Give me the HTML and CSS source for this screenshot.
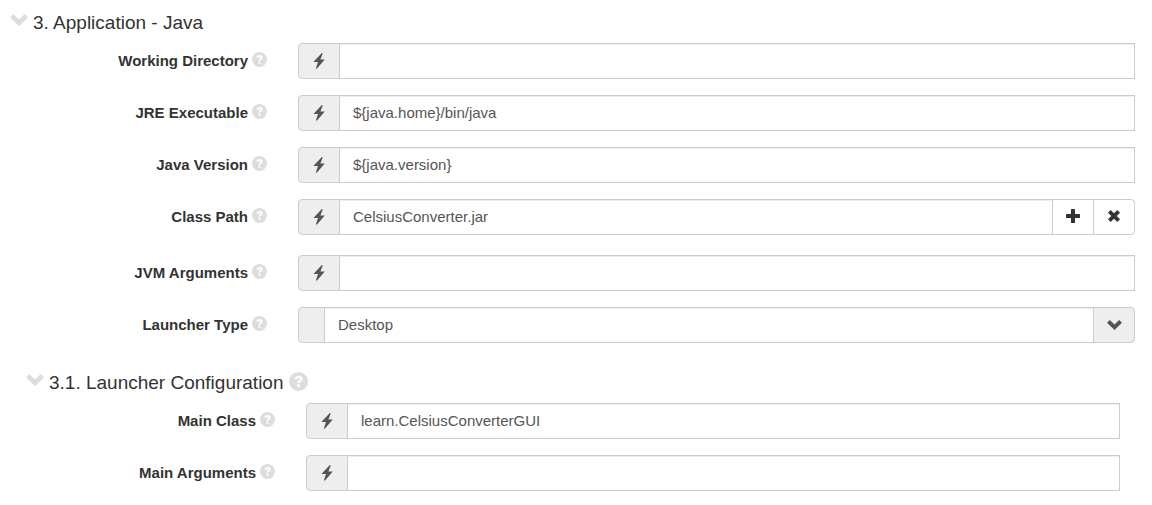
FILE: index.html
```html
<!DOCTYPE html>
<html lang="en">
<head>
<meta charset="utf-8">
<title>Application - Java</title>
<link rel="stylesheet" href="styles.css">
</head>
<body>
<svg class="symbols" aria-hidden="true">
  <symbol id="bolt" viewBox="0 0 12 16"><path d="M8.600 .3 .4 9 5 9 2.800 15.600 4 15.600 11.800 6.400 7.400 6.400 9.800 .3Z"/></symbol>
  <symbol id="help" viewBox="0 0 16 16"><path fill-rule="evenodd" d="M8 0a8 8 0 1 1 0 16A8 8 0 0 1 8 0ZM4.800 6.200H7.100C7.100 5.400 7.500 5 8.100 5S9 5.400 9 5.900C9 6.900 6.900 7.200 6.900 9.300H9.100C9.100 8.300 11.400 7.700 11.400 5.700C11.400 4.200 10 3.100 8.200 3.100C6.200 3.100 4.800 4.200 4.800 6.200ZM6.900 10.400V12.600H9.100V10.400Z"/></symbol>
  <symbol id="chevron" viewBox="0 0 18 12"><path d="M0 3.400 3.400 0 9 5.400 14.600 0 18 3.400 9 12Z"/></symbol>
  <symbol id="plus" viewBox="0 0 14 14"><path d="M5 .6Q5 0 5.600 0H8.400Q9 0 9 .6V5H13.400Q14 5 14 5.600V8.400Q14 9 13.400 9H9V13.400Q9 14 8.400 14H5.600Q5 14 5 13.400V9H.6Q0 9 0 8.400V5.600Q0 5 .6 5H5Z"/></symbol>
  <symbol id="remove" viewBox="0 0 12 12"><path d="M0 2.700 2.700 0 6 3.300 9.300 0 12 2.700 8.700 6 12 9.300 9.300 12 6 8.700 2.700 12 0 9.300 3.300 6Z"/></symbol>
</svg>
<form class="section">
  <h2 class="heading"><svg class="toggle"><use href="#chevron"/></svg>3. Application - Java</h2>
  <div class="row">
    <div class="label"><label for="dir">Working Directory</label><svg class="help"><use href="#help"/></svg></div>
    <div class="group"><span class="addon"><svg class="bolt"><use href="#bolt"/></svg></span><input class="field" id="dir" type="text"></div>
  </div>
  <div class="row">
    <div class="label"><label for="jre">JRE Executable</label><svg class="help"><use href="#help"/></svg></div>
    <div class="group"><span class="addon"><svg class="bolt"><use href="#bolt"/></svg></span><input class="field" id="jre" type="text" value="${java.home}/bin/java"></div>
  </div>
  <div class="row">
    <div class="label"><label for="version">Java Version</label><svg class="help"><use href="#help"/></svg></div>
    <div class="group"><span class="addon"><svg class="bolt"><use href="#bolt"/></svg></span><input class="field" id="version" type="text" value="${java.version}"></div>
  </div>
  <div class="row row-list">
    <div class="label"><label for="path">Class Path</label><svg class="help"><use href="#help"/></svg></div>
    <div class="group"><span class="addon"><svg class="bolt"><use href="#bolt"/></svg></span><input class="field" id="path" type="text" value="CelsiusConverter.jar"><button class="action" type="button" aria-label="Add"><svg class="plus"><use href="#plus"/></svg></button><button class="action" type="button" aria-label="Remove"><svg class="remove"><use href="#remove"/></svg></button></div>
  </div>
  <div class="row">
    <div class="label"><label for="jvm">JVM Arguments</label><svg class="help"><use href="#help"/></svg></div>
    <div class="group"><span class="addon"><svg class="bolt"><use href="#bolt"/></svg></span><input class="field" id="jvm" type="text"></div>
  </div>
  <div class="row">
    <div class="label"><label for="launcher">Launcher Type</label><svg class="help"><use href="#help"/></svg></div>
    <div class="group"><span class="addon addon-empty"></span><select class="field" id="launcher"><option>Desktop</option></select><span class="addon addon-end"><svg class="arrow"><use href="#chevron"/></svg></span></div>
  </div>
  <div class="subsection">
    <h3 class="heading"><svg class="toggle"><use href="#chevron"/></svg>3.1. Launcher Configuration<svg class="help help-large"><use href="#help"/></svg></h3>
    <div class="row">
      <div class="label"><label for="main">Main Class</label><svg class="help"><use href="#help"/></svg></div>
      <div class="group"><span class="addon"><svg class="bolt"><use href="#bolt"/></svg></span><input class="field" id="main" type="text" value="learn.CelsiusConverterGUI"></div>
    </div>
    <div class="row">
      <div class="label"><label for="args">Main Arguments</label><svg class="help"><use href="#help"/></svg></div>
      <div class="group"><span class="addon"><svg class="bolt"><use href="#bolt"/></svg></span><input class="field" id="args" type="text"></div>
    </div>
  </div>
</form>
</body>
</html>
```
FILE: styles.css
```css
* { box-sizing: border-box; }
body {
  margin: 0;
  background: #fff;
  color: #333;
  font: 15px/20px "Liberation Sans", Arial, sans-serif;
}
svg { flex: none; fill: currentColor; }
.symbols { display: none; }
.section { padding: 11px 17px 0 10px; }
.subsection { padding: 12px 15px 0 16px; }
.heading {
  display: flex;
  align-items: center;
  margin: 0 0 8px;
  font-size: 19px;
  font-weight: 400;
  line-height: 24px;
}
.toggle {
  width: 18px;
  height: 12px;
  margin: 0 5px 6px 0;
  color: #ddd;
}
.row {
  display: grid;
  grid-template-columns: 257px 1fr;
  column-gap: 31px;
  margin-bottom: 16px;
}
.subsection .row { grid-template-columns: 249px 1fr; }
.row-list { margin-bottom: 20px; }
.label {
  display: flex;
  justify-content: flex-end;
  align-items: center;
  font-weight: 700;
}
.help {
  width: 15px;
  height: 15px;
  margin: 0 0 3px 4px;
  color: #ddd;
}
.help-large {
  width: 19px;
  height: 19px;
  margin-left: 5px;
}
.group { display: flex; height: 36px; }
.addon {
  display: flex;
  flex: none;
  align-items: center;
  justify-content: center;
  width: 42px;
  border: 1px solid #ccc;
  border-radius: 4px 0 0 4px;
  background: #eee;
  color: #555;
}
.addon-empty { width: 27px; }
.addon-end { border-radius: 0 4px 4px 0; margin-left: -1px; }
.field {
  flex: 1;
  min-width: 0;
  margin: 0 0 0 -1px;
  padding: 0 13px;
  border: 1px solid #ccc;
  border-radius: 0;
  background: #fff;
  box-shadow: inset 0 1px 1px rgba(0, 0, 0, 0.075);
  color: #555;
  font: inherit;
  appearance: none;
}
.action {
  display: flex;
  flex: none;
  align-items: center;
  justify-content: center;
  width: 42px;
  margin-left: -1px;
  padding: 0 0 3px;
  border: 1px solid #ccc;
  background: #fff;
  color: #333;
}
.action:last-child { border-radius: 0 4px 4px 0; }
.bolt { width: 12px; height: 16px; }
.plus { width: 14px; height: 14px; }
.remove { width: 12px; height: 12px; }
.arrow { width: 15px; height: 10px; }
```
